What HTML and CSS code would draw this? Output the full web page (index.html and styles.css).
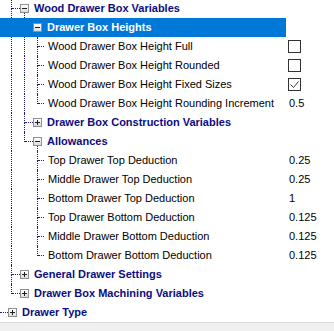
FILE: index.html
```html
<!DOCTYPE html>
<html lang="en">
<head>
  <meta charset="UTF-8">
  <title>Drawer Settings</title>
  <link rel="stylesheet" href="styles.css">
</head>
<body>
  <div class="grid">
    <!-- Wood Drawer Box Variables -->
    <div class="row">
      <div class="name">
        <span class="own"><span class="stem"><i class="up"></i><i class="dn"></i></span><span class="arm"></span></span>
        <span class="xw"><span class="exp"><svg width="5" height="5"><rect x="0" y="2" width="5" height="1"/></svg></span><i class="tail"></i></span>
        <span class="lbl cat">Wood Drawer Box Variables</span>
      </div>
      <div class="val"></div>
    </div>
    <div class="row sel">
      <div class="name">
        <span class="ind on"></span>
        <span class="own"><span class="stem"><i class="up"></i><i class="dn"></i></span><span class="arm"></span></span>
        <span class="xw"><span class="exp"><svg width="5" height="5"><rect x="0" y="2" width="5" height="1"/></svg></span><i class="tail"></i></span>
        <span class="lbl cat">Drawer Box Heights</span>
      </div>
      <div class="val"></div>
    </div>
    <div class="row">
      <div class="name">
        <span class="ind on"></span><span class="ind on"></span>
        <span class="own"><span class="stem"><i class="up"></i><i class="dn"></i></span><span class="arm leaf"></span></span>
        <span class="lbl leaf">Wood Drawer Box Height Full</span>
      </div>
      <div class="val"><span class="cb"></span></div>
    </div>
    <div class="row">
      <div class="name">
        <span class="ind on"></span><span class="ind on"></span>
        <span class="own"><span class="stem"><i class="up"></i><i class="dn"></i></span><span class="arm leaf"></span></span>
        <span class="lbl leaf">Wood Drawer Box Height Rounded</span>
      </div>
      <div class="val"><span class="cb"></span></div>
    </div>
    <div class="row">
      <div class="name">
        <span class="ind on"></span><span class="ind on"></span>
        <span class="own"><span class="stem"><i class="up"></i><i class="dn"></i></span><span class="arm leaf"></span></span>
        <span class="lbl leaf">Wood Drawer Box Height Fixed Sizes</span>
      </div>
      <div class="val"><span class="cb"><svg width="11" height="11"><path d="M1.5 5.5 L4.5 8.5 L9.5 2.5" fill="none" stroke="#3a3a3a" stroke-width="1"/></svg></span></div>
    </div>
    <div class="row">
      <div class="name">
        <span class="ind on"></span><span class="ind on"></span>
        <span class="own"><span class="stem last"><i class="up"></i><i class="dn"></i></span><span class="arm leaf"></span></span>
        <span class="lbl leaf">Wood Drawer Box Height Rounding Increment</span>
      </div>
      <div class="val"><span class="num">0.5</span></div>
    </div>
    <div class="row">
      <div class="name">
        <span class="ind on"></span>
        <span class="own"><span class="stem"><i class="up"></i><i class="dn"></i></span><span class="arm"></span></span>
        <span class="xw"><span class="exp"><svg width="5" height="5"><rect x="0" y="2" width="5" height="1"/><rect x="2" y="0" width="1" height="5"/></svg></span></span>
        <span class="lbl cat">Drawer Box Construction Variables</span>
      </div>
      <div class="val"></div>
    </div>
    <div class="row">
      <div class="name">
        <span class="ind on"></span>
        <span class="own"><span class="stem last"><i class="up"></i><i class="dn"></i></span><span class="arm"></span></span>
        <span class="xw"><span class="exp"><svg width="5" height="5"><rect x="0" y="2" width="5" height="1"/></svg></span><i class="tail"></i></span>
        <span class="lbl cat">Allowances</span>
      </div>
      <div class="val"></div>
    </div>
    <div class="row">
      <div class="name">
        <span class="ind on"></span><span class="ind"></span>
        <span class="own"><span class="stem"><i class="up"></i><i class="dn"></i></span><span class="arm leaf"></span></span>
        <span class="lbl leaf">Top Drawer Top Deduction</span>
      </div>
      <div class="val"><span class="num">0.25</span></div>
    </div>
    <div class="row">
      <div class="name">
        <span class="ind on"></span><span class="ind"></span>
        <span class="own"><span class="stem"><i class="up"></i><i class="dn"></i></span><span class="arm leaf"></span></span>
        <span class="lbl leaf">Middle Drawer Top Deduction</span>
      </div>
      <div class="val"><span class="num">0.25</span></div>
    </div>
    <div class="row">
      <div class="name">
        <span class="ind on"></span><span class="ind"></span>
        <span class="own"><span class="stem"><i class="up"></i><i class="dn"></i></span><span class="arm leaf"></span></span>
        <span class="lbl leaf">Bottom Drawer Top Deduction</span>
      </div>
      <div class="val"><span class="num">1</span></div>
    </div>
    <div class="row">
      <div class="name">
        <span class="ind on"></span><span class="ind"></span>
        <span class="own"><span class="stem"><i class="up"></i><i class="dn"></i></span><span class="arm leaf"></span></span>
        <span class="lbl leaf">Top Drawer Bottom Deduction</span>
      </div>
      <div class="val"><span class="num">0.125</span></div>
    </div>
    <div class="row">
      <div class="name">
        <span class="ind on"></span><span class="ind"></span>
        <span class="own"><span class="stem"><i class="up"></i><i class="dn"></i></span><span class="arm leaf"></span></span>
        <span class="lbl leaf">Middle Drawer Bottom Deduction</span>
      </div>
      <div class="val"><span class="num">0.125</span></div>
    </div>
    <div class="row">
      <div class="name">
        <span class="ind on"></span><span class="ind"></span>
        <span class="own"><span class="stem last"><i class="up"></i><i class="dn"></i></span><span class="arm leaf"></span></span>
        <span class="lbl leaf">Bottom Drawer Bottom Deduction</span>
      </div>
      <div class="val"><span class="num">0.125</span></div>
    </div>
    <div class="row">
      <div class="name">
        <span class="own"><span class="stem"><i class="up"></i><i class="dn"></i></span><span class="arm"></span></span>
        <span class="xw"><span class="exp"><svg width="5" height="5"><rect x="0" y="2" width="5" height="1"/><rect x="2" y="0" width="1" height="5"/></svg></span></span>
        <span class="lbl cat">General Drawer Settings</span>
      </div>
      <div class="val"></div>
    </div>
    <div class="row">
      <div class="name">
        <span class="own"><span class="stem last"><i class="up"></i><i class="dn"></i></span><span class="arm"></span></span>
        <span class="xw"><span class="exp"><svg width="5" height="5"><rect x="0" y="2" width="5" height="1"/><rect x="2" y="0" width="1" height="5"/></svg></span></span>
        <span class="lbl cat">Drawer Box Machining Variables</span>
      </div>
      <div class="val"></div>
    </div>
    <div class="row">
      <div class="name">
        <span class="own root"><span class="arm"></span></span>
        <span class="xw"><span class="exp"><svg width="5" height="5"><rect x="0" y="2" width="5" height="1"/><rect x="2" y="0" width="1" height="5"/></svg></span></span>
        <span class="lbl cat">Drawer Type</span>
      </div>
      <div class="val"></div>
    </div>
  </div>
  <div class="foot"></div>
</body>
</html>
```

FILE: styles.css
```css
* {
  font-family: "Liberation Sans", Arial, sans-serif;
}
html, body {
  height: 100%;
}
body {
  margin: 0;
  display: flex;
  flex-direction: column;
  overflow: hidden;
  background: #ffffff;
  font-size: 11px;
  color: #000000;
}
.grid {
  margin-top: -1px;
}
.row {
  display: flex;
  height: 19px;
}
.name {
  display: flex;
  width: 286px;
  flex: none;
}
.row.sel .name {
  background: #0078d7;
}
.row.sel .name .lbl {
  color: #ffffff;
}
.row.sel .ind::before,
.row.sel .stem i,
.row.sel .arm,
.row.sel .tail {
  border-color: transparent !important;
}

/* tree guide lines */
.ind {
  display: flex;
  width: 13px;
  flex: none;
}
.ind.on::before {
  content: "";
  margin-left: 11px;
  border-left: 1px dotted #1c1c84;
}
.own {
  display: flex;
  flex: none;
  margin-left: 11px;
}
.own.root {
  margin-left: 0;
}
.stem {
  display: flex;
  flex-direction: column;
  width: 1px;
}
.stem i {
  display: block;
  border-left: 1px dotted #1c1c84;
}
.stem .up {
  height: 10px;
  box-sizing: border-box;
}
.stem .dn {
  flex: 1;
}
.stem.last .dn {
  border-left: none;
}
.arm {
  width: 8px;
  height: 10px;
  box-sizing: border-box;
  border-bottom: 1px dotted #1c1c84;
}
.arm.leaf {
  width: 6px;
}

/* expander box */
.xw {
  display: flex;
  flex-direction: column;
  width: 9px;
  flex: none;
  padding-top: 5px;
}
.exp {
  display: flex;
  align-items: center;
  justify-content: center;
  width: 9px;
  height: 9px;
  box-sizing: border-box;
  border: 1px solid #8e8f8f;
  background: linear-gradient(#ffffff, #dcdcdc);
}
.exp svg {
  display: block;
  fill: #1e1e1e;
}
.tail {
  flex: 1;
  margin-left: 4px;
  border-left: 1px dotted #1c1c84;
}

.lbl {
  margin-left: 5px;
  line-height: 19px;
  white-space: nowrap;
}
.lbl.leaf {
  margin-left: 4px;
}
.lbl.cat {
  font-weight: bold;
  color: #0c0c80;
}

/* value column */
.val {
  display: flex;
  align-items: center;
  padding-left: 2px;
}
.num {
  margin-left: 1px;
  line-height: 19px;
}
.cb {
  display: flex;
  align-items: center;
  justify-content: center;
  width: 13px;
  height: 13px;
  box-sizing: border-box;
  border: 1px solid #333333;
  background: #ffffff;
}
.cb svg {
  display: block;
}
.foot {
  flex: 1;
  border-top: 1px solid #dadada;
  background: #f0f0f0;
}
```
